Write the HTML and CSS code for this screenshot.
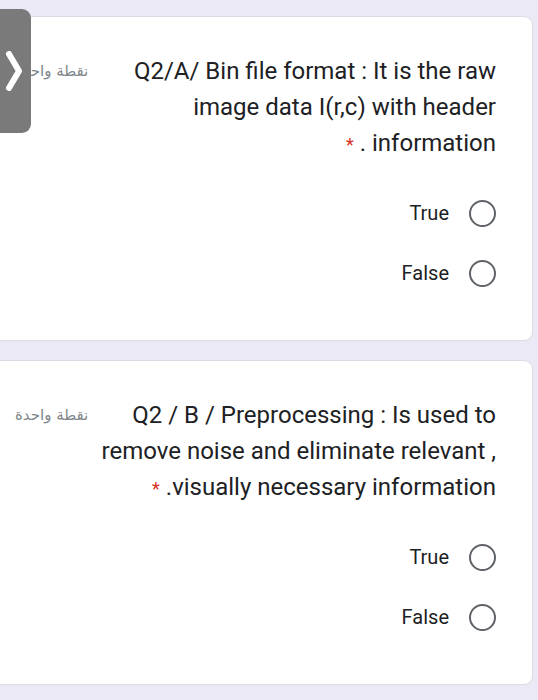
FILE: index.html
```html
<!DOCTYPE html>
<html lang="ar">
<head>
<meta charset="utf-8">
<title>Quiz</title>
<link rel="stylesheet" href="styles.css">
</head>
<body>
<main class="page">
  <section class="card">
    <div class="head">
      <span class="points">نقطة واحدة</span>
      <div class="question">Q2/A/ Bin file format : It is the raw<br>image data I(r,c) with header<br><span class="req">*</span> . information</div>
    </div>
    <div class="options">
      <label class="option"><span class="opt-text">True</span><span class="radio"></span></label>
      <label class="option"><span class="opt-text">False</span><span class="radio"></span></label>
    </div>
  </section>
  <section class="card">
    <div class="head">
      <span class="points">نقطة واحدة</span>
      <div class="question">Q2 / B / Preprocessing : Is used to<br>remove noise and eliminate relevant ,<br><span class="req">*</span> .visually necessary information</div>
    </div>
    <div class="options">
      <label class="option"><span class="opt-text">True</span><span class="radio"></span></label>
      <label class="option"><span class="opt-text">False</span><span class="radio"></span></label>
    </div>
  </section>
</main>
<div class="side-tab">
  <svg class="chev" width="18" height="40" viewBox="0 0 18 40"><path d="M4 3 L14 20 L4 37" fill="none" stroke="#fff" stroke-width="6" stroke-linecap="round" stroke-linejoin="round"/></svg>
</div>
</body>
</html>
```
FILE: styles.css
```css
html, body {
  margin: 0;
  padding: 0;
}
body {
  background: #ece9f6;
  font-family: Roboto, "Noto Sans", sans-serif;
  color: #202124;
  overflow: hidden;
}
.page {
  display: flex;
  flex-direction: column;
  gap: 19px;
  padding: 16px 5px 20px 0;
  margin-left: -12px;
}
.card {
  background: #fff;
  border: 1px solid #dcdbe3;
  border-radius: 9px;
  padding: 36px 36px 37px 26px;
}
.head {
  display: flex;
  align-items: flex-start;
  gap: 8px;
}
.points {
  flex-shrink: 0;
  font-family: "DejaVu Sans", sans-serif;
  font-size: 15px;
  color: #80868b;
  line-height: 36px;
  white-space: nowrap;
  direction: rtl;
}
.question {
  flex: 1;
  min-width: 0;
  text-align: right;
  white-space: nowrap;
  font-size: 24px;
  line-height: 36px;
  color: #202124;
}
.req {
  color: #d93025;
  font-size: 18px;
}
.options {
  margin-top: 20px;
  display: flex;
  flex-direction: column;
}
.option {
  height: 60px;
  display: flex;
  justify-content: flex-end;
  align-items: center;
  gap: 20px;
}
.opt-text {
  font-size: 20px;
  color: #202124;
}
.radio {
  width: 23px;
  height: 23px;
  border: 2.5px solid #5f6368;
  border-radius: 50%;
}
.side-tab {
  position: absolute;
  left: 0;
  top: 9px;
  width: 31px;
  height: 124px;
  background: #7a7a7a;
  border-radius: 0 9px 9px 0;
  display: flex;
  align-items: center;
  padding-left: 5px;
  box-sizing: border-box;
}
```
